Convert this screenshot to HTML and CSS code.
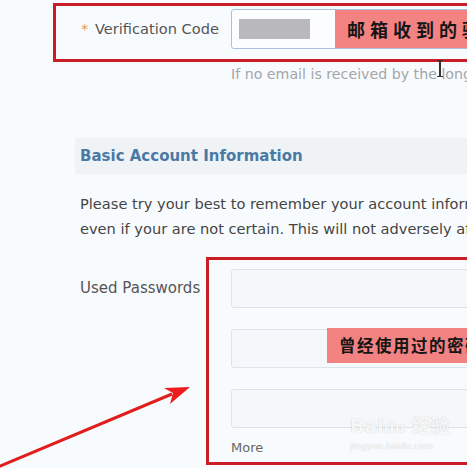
FILE: index.html
```html
<!DOCTYPE html>
<html>
<head>
<meta charset="utf-8">
<link rel="stylesheet" href="styles.css">
</head>
<body>
<div class="page">
  <div class="row row-verify">
    <div class="label"><span class="req">*</span> Verification Code</div>
    <div class="field">
      <div class="input input-code"><span class="code-mask"></span></div>
    </div>
  </div>
  <div class="row">
    <div class="label"></div>
    <div class="hint">If no email is received by the longest time, please check your spam folder.</div>
  </div>

  <h2 class="section-title">Basic Account Information</h2>
  <p class="desc">Please try your best to remember your account information and fill in<br>even if your are not certain. This will not adversely affect your appeal.</p>

  <div class="row row-pw">
    <div class="label label-pw">Used Passwords</div>
    <div class="fields">
      <div class="input"></div>
      <div class="input"></div>
      <div class="input"></div>
      <a class="more">More</a>
    </div>
  </div>

  <div class="mark mark-top"></div>
  <div class="note note-top">邮箱收到的验证码</div>
  <div class="ibeam"></div>
  <div class="mark mark-pw"></div>
  <div class="note note-pw">曾经使用过的密码</div>
  <svg class="arrow" width="200" height="90" viewBox="0 0 200 90">
    <line x1="-2" y1="87" x2="172" y2="14" stroke="#e01e1e" stroke-width="3"/>
    <polygon points="190,7 170,24 173,13 164,8" fill="#ec1c1c"/>
  </svg>
  <div class="watermark">
    <div class="wm-logo">Bai<span class="wm-du">du</span> 经验</div>
    <div class="wm-url">jingyan.baidu.com</div>
  </div>
</div>
</body>
</html>
```
FILE: styles.css
```css
html, body {
  margin: 0;
  padding: 0;
  background: #f8fbfd;
  overflow: hidden;
}
body {
  width: 467px;
  height: 468px;
  font-family: "DejaVu Sans", Verdana, sans-serif;
  white-space: nowrap;
}
.page {
  position: relative;
  height: 468px;
  padding: 9px 0 0 80px;
  box-sizing: border-box;
  overflow: hidden;
}
.row {
  display: flex;
  align-items: flex-start;
}
.label {
  width: 151px;
  flex: none;
  font-size: 15px;
  color: #555;
}
.row-verify .label {
  line-height: 40px;
  padding-left: 1px;
  width: 150px;
  font-size: 14.6px;
}
.req {
  color: #e8974f;
  margin-right: 2px;
}
.field, .fields {
  flex: none;
  width: 300px;
}
.input {
  height: 39px;
  box-sizing: border-box;
  border: 1px solid #dde3ea;
  border-radius: 3px;
  background: #f5f7fa;
}
.input-code {
  height: 40px;
  border-color: #a8c2de;
  background: #fcfdfe;
  display: flex;
  align-items: center;
  padding-left: 7px;
}
.code-mask {
  display: block;
  width: 71px;
  height: 20px;
  background: #b9b9bb;
}
.hint {
  margin-top: 16px;
  font-size: 14.2px;
  line-height: 18px;
  color: #a3a6aa;
}
.section-title {
  margin: 55px 0 0 -5px;
  padding-left: 5px;
  height: 36px;
  line-height: 36px;
  background: #eff3f6;
  font-size: 15px;
  font-weight: bold;
  color: #4b79a6;
}
.desc {
  margin: 17px 0 0;
  font-size: 14.6px;
  line-height: 25px;
  color: #454545;
}
.row-pw {
  margin-top: 28px;
}
.label-pw {
  line-height: 39px;
}
.fields {
  display: flex;
  flex-direction: column;
  gap: 21px;
}
.more {
  margin-top: -9px;
  font-size: 13px;
  line-height: 16px;
  color: #666;
}
.mark {
  position: absolute;
  border: 3px solid #c91c24;
  right: -10px;
}
.mark-top {
  left: 53px;
  top: 3px;
  height: 53px;
}
.mark-pw {
  left: 206px;
  top: 257px;
  height: 202px;
}
.note {
  position: absolute;
  background: #f38283;
  color: #151515;
  font-weight: bold;
  font-family: "Noto Sans CJK SC", sans-serif;
  right: -200px;
}
.note-top {
  left: 335px;
  top: 10px;
  height: 38px;
  line-height: 38px;
  padding-left: 12px;
  font-size: 18px;
  letter-spacing: 5px;
}
.note-pw {
  left: 327px;
  top: 328px;
  height: 35px;
  line-height: 35px;
  padding-left: 12px;
  font-size: 16.5px;
  letter-spacing: 1.5px;
}
.ibeam {
  position: absolute;
  left: 439px;
  top: 60px;
  width: 2px;
  height: 17px;
  background: #333;
}
.ibeam::before, .ibeam::after {
  content: "";
  position: absolute;
  left: -2px;
  width: 6px;
  height: 1px;
  background: #333;
}
.ibeam::before { top: 0; }
.ibeam::after { bottom: 0; }
.arrow {
  position: absolute;
  left: 0;
  top: 380px;
}
.watermark {
  position: absolute;
  left: 350px;
  top: 414px;
  color: rgba(255,255,255,0.9);
  text-shadow: 0 0 1px rgba(0,0,0,0.25);
  font-family: "DejaVu Sans", "Noto Sans CJK SC", sans-serif;
}
.wm-logo {
  font-size: 19px;
  font-weight: bold;
  line-height: 24px;
}
.wm-du {
  font-size: 15px;
}
.wm-url {
  font-size: 9px;
  line-height: 12px;
}
```
